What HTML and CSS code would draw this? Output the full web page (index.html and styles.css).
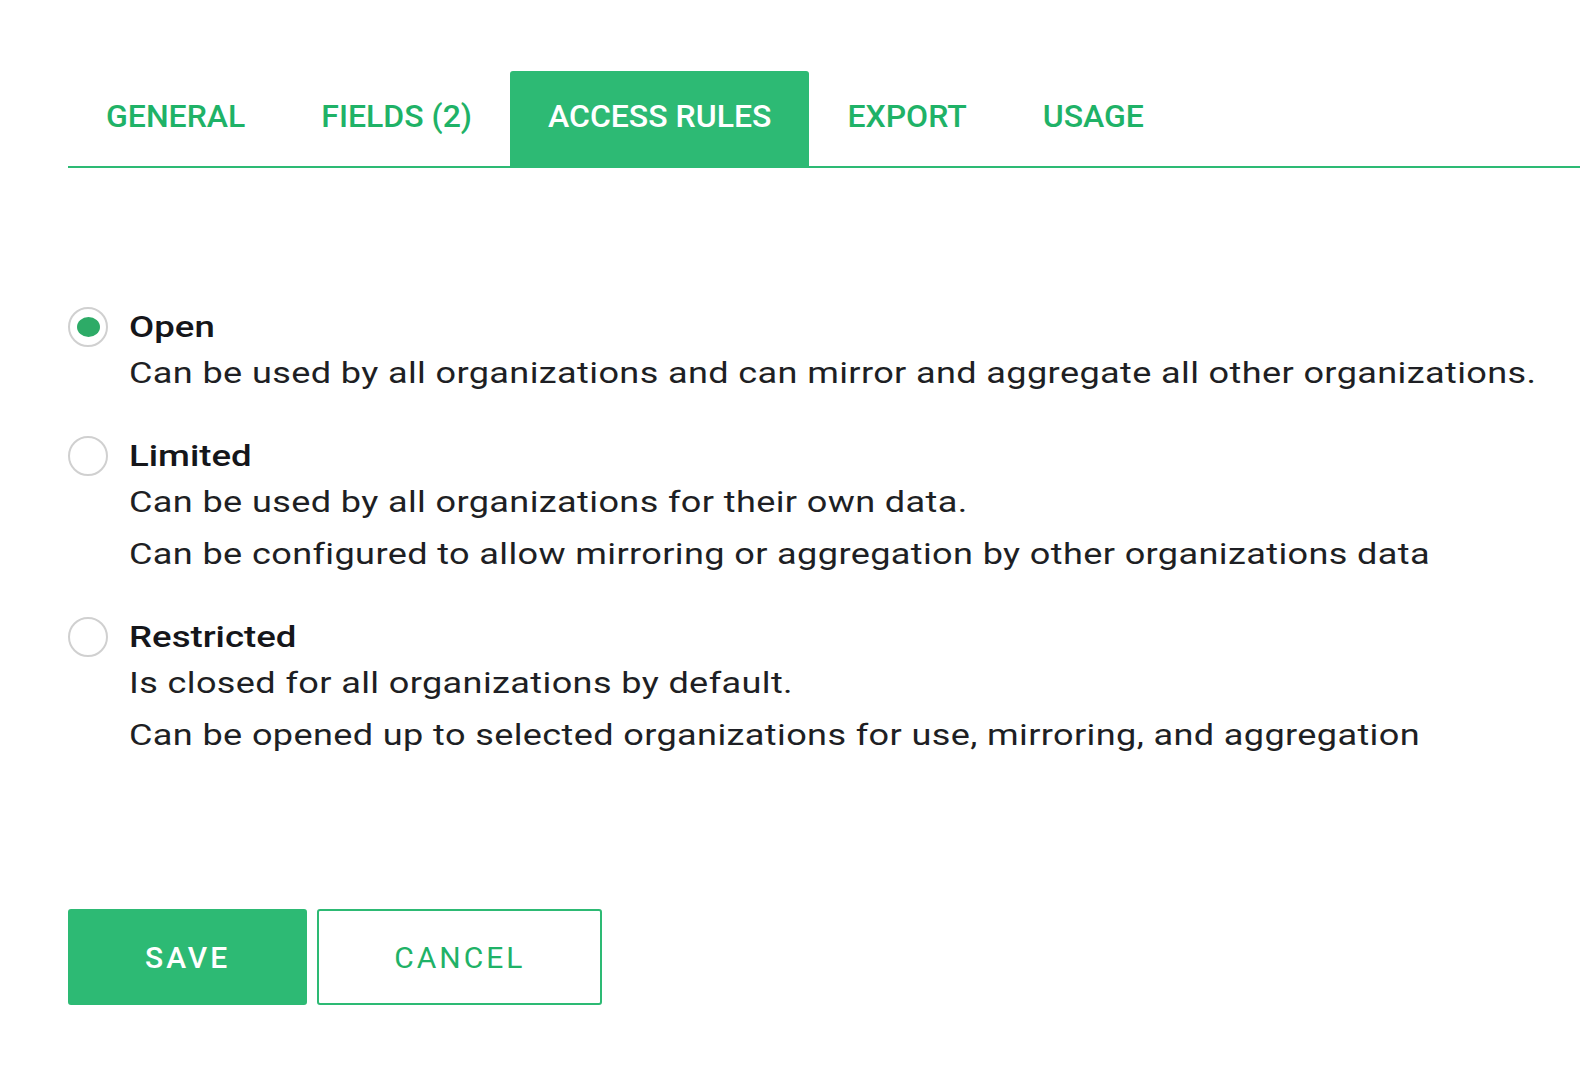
FILE: index.html
```html
<!DOCTYPE html>
<html lang="en">
<head>
    <meta charset="UTF-8">
    <meta name="viewport" content="width=device-width, initial-scale=1.0">
    <title>Access rules</title>
    <link rel="stylesheet" href="styles.css">
</head>
<body>
    <div class="page">
        <!-- tabs -->
        <nav class="tabs">
            <a class="tab">GENERAL</a>
            <a class="tab">FIELDS (2)</a>
            <a class="tab active">ACCESS RULES</a>
            <a class="tab">EXPORT</a>
            <a class="tab">USAGE</a>
        </nav>

        <!-- access options -->
        <div class="options">
            <label class="option">
                <span class="radio checked"></span>
                <span class="option-text">
                    <span class="option-title">Open</span>
                    <span class="option-desc">Can be used by all organizations and can mirror and aggregate all other organizations.</span>
                </span>
            </label>
            <label class="option">
                <span class="radio"></span>
                <span class="option-text">
                    <span class="option-title">Limited</span>
                    <span class="option-desc">Can be used by all organizations for their own data.</span>
                    <span class="option-desc">Can be configured to allow mirroring or aggregation by other organizations data</span>
                </span>
            </label>
            <label class="option">
                <span class="radio"></span>
                <span class="option-text">
                    <span class="option-title">Restricted</span>
                    <span class="option-desc">Is closed for all organizations by default.</span>
                    <span class="option-desc">Can be opened up to selected organizations for use, mirroring, and aggregation</span>
                </span>
            </label>
        </div>

        <div class="actions">
            <button class="btn btn-primary">SAVE</button>
            <button class="btn btn-outline">CANCEL</button>
        </div>
    </div>
</body>
</html>
```

FILE: styles.css
```css
body {
    font-family: Roboto, 'Liberation Sans', sans-serif;
    margin: 0;
    padding: 0;
    background: #fff;
    color: #1e1f24;
}
.page {
    padding: 71px 0 0 68px;
}
.tabs {
    display: flex;
    border-bottom: 2px solid #2dba74;
}
.tab {
    padding: 0 38px 4px;
    line-height: 91px;
    font-size: 32px;
    font-weight: 500;
    color: #1fb267;
    border-radius: 3px 3px 0 0;
}
.tab.active {
    background-color: #2dba74;
    color: #fff;
}
.options {
    margin-top: 139px;
}
.option {
    display: flex;
    align-items: flex-start;
    margin-bottom: 37px;
}
.radio {
    width: 36px;
    height: 36px;
    border: 2px solid #d0d0d0;
    border-radius: 50%;
    margin-right: 21px;
    display: flex;
    align-items: center;
    justify-content: center;
    flex-shrink: 0;
}
.radio.checked::after {
    content: "";
    width: 23px;
    height: 20px;
    border-radius: 50%;
    background-color: #2dab67;
}
.option-text {
    display: flex;
    flex-direction: column;
    align-items: flex-start;
}
/* the reference text is drawn wider than Roboto */
.option-title {
    font-size: 30px;
    font-weight: 500;
    line-height: 40px;
    color: #15161a;
    transform: scaleX(1.22);
    transform-origin: left center;
}
.option-desc {
    font-size: 29px;
    line-height: 52px;
    letter-spacing: 0.3px;
    transform: scaleX(1.244);
    transform-origin: left center;
}
.actions {
    display: flex;
    gap: 10px;
    margin-top: 148px;
}
.btn {
    height: 96px;
    padding: 0 75px;
    font-family: Roboto, 'Liberation Sans', sans-serif;
    font-size: 30px;
    font-weight: 500;
    letter-spacing: 3px;
    border-radius: 3px;
    cursor: pointer;
}
.btn-primary {
    background-color: #2dba74;
    border: 2px solid #2dba74;
    color: #fff;
}
.btn-outline {
    background-color: #fff;
    border: 2px solid #2dba74;
    color: #1fb267;
    font-weight: 400;
}
```
